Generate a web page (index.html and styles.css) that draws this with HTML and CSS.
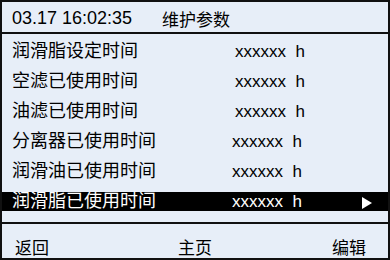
FILE: index.html
```html
<!DOCTYPE html>
<html lang="zh">
<head>
    <meta charset="UTF-8">
    <title>维护参数</title>
    <link rel="stylesheet" href="styles.css">
</head>
<body>
    <div class="screen">
        <div class="top">
            <span class="clock">03.17 16:02:35</span>
            <span class="title">维护参数</span>
        </div>

        <div class="list">
            <div class="row">
                <span class="label">润滑脂设定时间</span>
                <span class="value">xxxxxx&nbsp;&nbsp;h</span>
            </div>
            <div class="row">
                <span class="label">空滤已使用时间</span>
                <span class="value">xxxxxx&nbsp;&nbsp;h</span>
            </div>
            <div class="row">
                <span class="label">油滤已使用时间</span>
                <span class="value">xxxxxx&nbsp;&nbsp;h</span>
            </div>
            <div class="row">
                <span class="label">分离器已使用时间</span>
                <span class="value shift">xxxxxx&nbsp;&nbsp;h</span>
            </div>
            <div class="row">
                <span class="label">润滑油已使用时间</span>
                <span class="value shift">xxxxxx&nbsp;&nbsp;h</span>
            </div>
            <div class="row selected">
                <span class="label">润滑脂已使用时间</span>
                <span class="value shift">xxxxxx&nbsp;&nbsp;h</span>
                <span class="arrow"></span>
            </div>
        </div>

        <div class="bottom">
            <span class="back">返回</span>
            <span class="home">主页</span>
            <span class="edit">编辑</span>
        </div>
    </div>
</body>
</html>
```

FILE: styles.css
```css
body {
    margin: 0;
    font-family: "Liberation Sans", "Noto Sans CJK SC", sans-serif;
    color: #000;
    background-color: #e7eef8;
}

.screen {
    width: 390px;
    height: 260px;
    box-sizing: border-box;
    border: 2px solid #111;
    display: flex;
    flex-direction: column;
    background-color: #e7eef8;
}

.top {
    height: 32px;
    border-bottom: 2px solid #111;
    display: flex;
    align-items: center;
    padding: 3px 0 0 10px;
    box-sizing: border-box;
    flex-shrink: 0;
}

.clock {
    font-size: 18px;
    width: 150px;
}

.title {
    font-size: 17px;
}

.list {
    flex: 1;
    padding-top: 8px;
}

.row {
    height: 19px;
    line-height: 19px;
    margin-bottom: 11px;
    display: grid;
    grid-template-columns: 223px 1fr auto;
    align-items: center;
    padding-left: 10px;
}

.label {
    font-size: 18px;
}

.value {
    font-size: 17px;
}

.value.shift {
    margin-left: -3px;
}

.selected {
    background-color: #000;
    color: #fff;
}

.arrow {
    width: 0;
    height: 0;
    border-left: 10px solid #fff;
    border-top: 6px solid transparent;
    border-bottom: 6px solid transparent;
    margin: 2px 16px 0 0;
}

.bottom {
    height: 41px;
    border-top: 2px solid #111;
    box-sizing: border-box;
    display: grid;
    grid-template-columns: 1fr auto 1fr;
    align-items: center;
    padding: 5px 17px 0 17px;
    font-size: 17px;
    flex-shrink: 0;
}

.back {
    margin-left: -4px;
}

.edit {
    text-align: right;
    margin-right: 5px;
}
```
